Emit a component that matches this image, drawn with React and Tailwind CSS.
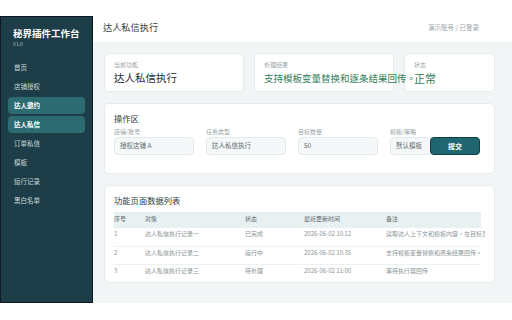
const navItems = [
  { label: '首页' },
  { label: '店铺授权' },
  { label: '达人邀约', active: true },
  { label: '达人私信', active: true },
  { label: '订单私信' },
  { label: '模板' },
  { label: '运行记录' },
  { label: '黑白名单' },
];

const rows = [
  { id: 1, target: '达人私信执行记录一', status: '已完成', time: '2026-06-02 10:12', note: '读取达人上下文和模板内容，在目标页面执行' },
  { id: 2, target: '达人私信执行记录二', status: '运行中', time: '2026-06-02 10:35', note: '支持模板变量替换和逐条结果回传。' },
  { id: 3, target: '达人私信执行记录三', status: '待处理', time: '2026-06-02 11:00', note: '等待执行器回传' },
];

function Sidebar() {
  return (
    <aside className="mt-4 w-[93px] shrink-0 border border-[#0c1b20] bg-[#1d3e48] px-[7px]">
      <div className="px-[5px] pt-[9px]">
        <div className="text-[9.5px] font-bold leading-[14px] text-white">秘界插件工作台</div>
        <div className="text-[5px] leading-[7px] text-[#a9bcc0]">V1.0</div>
      </div>
      <nav className="mt-[12px] flex flex-col gap-[2px]">
        {navItems.map((item) => (
          <div
            key={item.label}
            className={`flex h-[17px] items-center rounded-[4px] px-[6px] text-[6.5px] ${
              item.active ? 'bg-[#2c6b72] font-bold text-white' : 'text-[#c9d6d8]'
            }`}
          >
            {item.label}
          </div>
        ))}
      </nav>
    </aside>
  );
}

function StatCard({ label, value, valueClass, className = '' }) {
  return (
    <div className={`h-[39px] rounded-[5px] border border-[#e6eced] bg-white px-[9px] pt-[6px] ${className}`}>
      <div className="text-[6px] leading-[9px] text-[#9aa5a8]">{label}</div>
      <div className={`mt-[2px] whitespace-nowrap leading-[14px] ${valueClass}`}>{value}</div>
    </div>
  );
}

function Field({ label, value }) {
  return (
    <div className="flex w-[80px] flex-col">
      <div className="text-[6px] leading-[9px] text-[#9aa5a8]">{label}</div>
      <div className="mt-[1px] flex h-[18px] items-center rounded-[4px] border border-[#e4ebec] bg-[#f5f8f9] px-[5px] text-[6.5px] text-[#5d6a6e]">
        {value}
      </div>
    </div>
  );
}

export default function App() {
  return (
    <div className="flex h-[303px] w-[512px] bg-white font-['Noto_Sans_CJK_TC',sans-serif] text-[#2b3a3f]">
      <Sidebar />
      <div className="flex min-w-0 flex-1 flex-col">
        {/* Header */}
        <header className="flex h-[42px] shrink-0 items-center justify-between bg-white pl-[10px] pr-[33px] pt-[14px]">
          <div className="text-[9.2px] text-[#2f3d42]">达人私信执行</div>
          <div className="text-[6.5px] text-[#9aa5a8]">演示账号 / 已登录</div>
        </header>

        <main className="flex-1 bg-[#f1f5f6] pl-[11px] pr-[17px] pt-[11px]">
          {/* Summary cards */}
          <div className="grid grid-cols-[140px_140px_1fr] gap-[10px]">
            <StatCard label="当前功能" value="达人私信执行" valueClass="text-[10.5px] text-[#1f2d33]" />
            <StatCard
              label="处理结果"
              value="支持模板变量替换和逐条结果回传。"
              valueClass="text-[9.5px] text-[#2f7d5a]"
              className="relative z-10 bg-transparent"
            />
            <StatCard label="状态" value="正常" valueClass="text-[11px] text-[#2f7d5a]" />
          </div>

          {/* Operation area */}
          <div className="mt-[11px] h-[71px] rounded-[5px] border border-[#e6eced] bg-white px-[9px] pt-[8px]">
            <div className="text-[8.3px] leading-[12px] text-[#2b3a3f]">操作区</div>
            <div className="mt-[3px] flex gap-[12px]">
              <Field label="店铺/账号" value="授权店铺 A" />
              <Field label="任务类型" value="达人私信执行" />
              <Field label="目标数量" value="50" />
              <div className="flex flex-col">
                <div className="text-[6px] leading-[9px] text-[#9aa5a8]">模板/策略</div>
                <div className="mt-[1px] flex">
                  <div className="flex h-[18px] w-[42px] items-center rounded-l-[4px] border border-[#e4ebec] bg-[#f5f8f9] px-[5px] text-[6.5px] text-[#5d6a6e]">
                    默认模板
                  </div>
                  <button className="-ml-[2px] h-[18px] w-[50px] rounded-[4px] border border-[#0f3f45] bg-[#1f6670] text-[7px] font-bold text-white">
                    提交
                  </button>
                </div>
              </div>
            </div>
          </div>

          {/* Table */}
          <div className="mt-[11px] h-[98px] rounded-[5px] border border-[#e6eced] bg-white px-[9px] pt-[8px]">
            <div className="text-[8.3px] leading-[12px] text-[#2b3a3f]">功能页面数据列表</div>
            <div className="mt-[6px] overflow-hidden">
              <table className="w-[367px] table-fixed border-collapse text-left text-[6px] leading-[9px]">
                <colgroup>
                  <col className="w-[31px]" />
                  <col className="w-[100px]" />
                  <col className="w-[59px]" />
                  <col className="w-[82px]" />
                  <col />
                </colgroup>
                <thead>
                  <tr className="h-[16px] bg-[#e8f0f2] text-[#5d6a6e]">
                    <th className="pt-[2px] align-top font-normal">序号</th>
                    <th className="pt-[2px] align-top font-normal">对象</th>
                    <th className="pt-[2px] align-top font-normal">状态</th>
                    <th className="pt-[2px] align-top font-normal">最近更新时间</th>
                    <th className="pt-[2px] align-top font-normal">备注</th>
                  </tr>
                </thead>
                <tbody className="text-[#8a9599]">
                  {rows.map((row) => (
                    <tr key={row.id} className="h-[18px] border-b border-[#edf1f2] last:border-b-0">
                      <td className="pt-[1px] align-top">{row.id}</td>
                      <td className="pt-[1px] align-top">{row.target}</td>
                      <td className="pt-[1px] align-top">{row.status}</td>
                      <td className="pt-[1px] align-top">{row.time}</td>
                      <td className="overflow-visible whitespace-nowrap pt-[1px] align-top">{row.note}</td>
                    </tr>
                  ))}
                </tbody>
              </table>
            </div>
          </div>
        </main>
      </div>
    </div>
  );
}
